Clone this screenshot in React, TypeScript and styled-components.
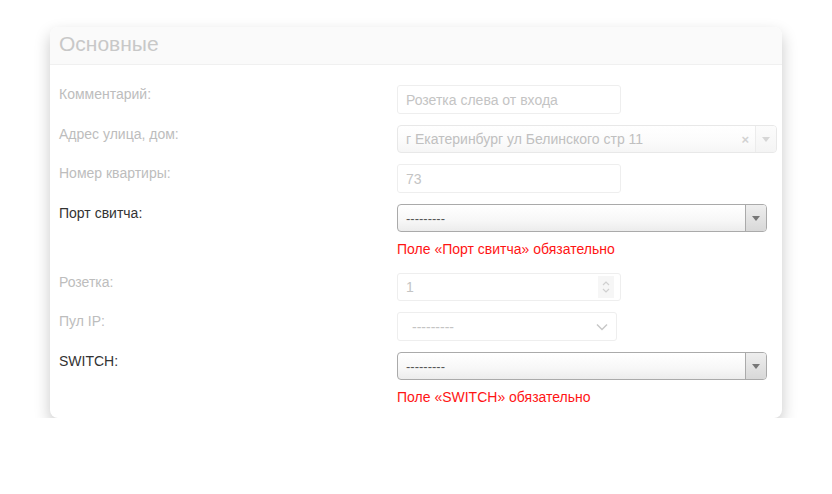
import React from 'react';
import styled, { createGlobalStyle, css } from 'styled-components';

const GlobalStyle = createGlobalStyle`
  html, body {
    margin: 0;
    padding: 0;
    background: #fff;
    font-family: 'Liberation Sans', Arial, sans-serif;
  }
`;

const Page = styled.div`
  padding: 27px 50px 0 50px;
  width: 732px;
`;

const Card = styled.div`
  background: #fff;
  border-radius: 8px;
  box-shadow: 0 7px 16px rgba(0, 0, 0, 0.22);
  overflow: hidden;
`;

const CardHeader = styled.div`
  height: 38px;
  box-sizing: border-box;
  padding: 5px 0 0 9px;
  background: #fafafa;
  border-bottom: 1px solid #f0f0f0;
  font-size: 21px;
  line-height: 24px;
  color: #c8c8c8;
`;

const CardBody = styled.div`
  padding: 20px 0 8px 9px;
  display: flex;
  flex-direction: column;
`;

const Row = styled.div`
  display: grid;
  grid-template-columns: 338px 1fr;
  margin-bottom: 11px;

  &:last-child {
    margin-bottom: 0;
  }
`;

const Label = styled.div<{ $active?: boolean }>`
  font-size: 14px;
  line-height: 16px;
  padding-top: 1px;
  color: ${(p) => (p.$active ? '#333' : '#bdbdbd')};
`;

const Field = styled.div`
  display: flex;
  flex-direction: column;
`;

const TextBox = styled.div<{ $w: number; $h?: number }>`
  width: ${(p) => p.$w}px;
  height: ${(p) => p.$h ?? 29}px;
  box-sizing: border-box;
  border: 1px solid #eee;
  border-radius: 3px;
  display: flex;
  align-items: center;
  padding: 0 8px;
  font-size: 14px;
  color: #c4c4c4;
  background: #fff;
`;

const Spinner = styled.div`
  margin-left: auto;
  width: 16px;
  height: 22px;
  background: #f6f6f6;
  display: flex;
  align-items: center;
  justify-content: center;
`;

const Chevron = styled.div`
  margin-left: auto;
  display: flex;
  align-items: center;
`;

const Select2 = styled.div<{ $w: number; $muted?: boolean }>`
  width: ${(p) => p.$w}px;
  height: 28px;
  box-sizing: border-box;
  border: 1px solid ${(p) => (p.$muted ? '#e8e8e8' : '#aaa')};
  border-radius: 4px;
  display: flex;
  align-items: stretch;
  font-size: ${(p) => (p.$muted ? 14 : 13)}px;
  color: ${(p) => (p.$muted ? '#c0c0c0' : '#555')};
  background: linear-gradient(to bottom, #ffffff 0%, #f7f7f7 60%, #ececec 100%);
  ${(p) =>
    p.$muted &&
    css`
      background: linear-gradient(to bottom, #ffffff 0%, #fbfbfb 60%, #f6f6f6 100%);
    `}
`;

const SelectText = styled.div`
  flex: 1;
  display: flex;
  align-items: center;
  padding-left: 8px;
`;

const Clear = styled.div`
  display: flex;
  align-items: center;
  padding: 0 6px;
  color: #d2d2d2;
  font-size: 13px;
  font-weight: bold;
`;

const ArrowBox = styled.div<{ $muted?: boolean }>`
  width: 20px;
  border-left: 1px solid ${(p) => (p.$muted ? '#ececec' : '#aaa')};
  display: flex;
  align-items: center;
  justify-content: center;
  background: ${(p) =>
    p.$muted
      ? 'linear-gradient(to bottom, #fcfcfc, #f4f4f4)'
      : 'linear-gradient(to bottom, #eeeeee, #d8d8d8)'};
  border-radius: 0 3px 3px 0;
`;

const Triangle = styled.div<{ $muted?: boolean }>`
  width: 0;
  height: 0;
  border-left: 4px solid transparent;
  border-right: 4px solid transparent;
  border-top: 5px solid ${(p) => (p.$muted ? '#d6d6d6' : '#777')};
`;

const ErrorText = styled.div`
  color: #ff1414;
  font-size: 14px;
  line-height: 20px;
  margin-top: 7px;
  margin-bottom: 3px;
`;

const Dashes = '---------';

export default function App() {
  return (
    <>
      <GlobalStyle />
      <Page>
        <Card>
          <CardHeader>Основные</CardHeader>
          <CardBody>
            <Row>
              <Label>Комментарий:</Label>
              <Field>
                <TextBox $w={224}>Розетка слева от входа</TextBox>
              </Field>
            </Row>
            <Row>
              <Label>Адрес улица, дом:</Label>
              <Field>
                <Select2 $w={380} $muted>
                  <SelectText>г Екатеринбург ул Белинского стр 11</SelectText>
                  <Clear>×</Clear>
                  <ArrowBox $muted>
                    <Triangle $muted />
                  </ArrowBox>
                </Select2>
              </Field>
            </Row>
            <Row>
              <Label>Номер квартиры:</Label>
              <Field>
                <TextBox $w={224}>73</TextBox>
              </Field>
            </Row>
            <Row>
              <Label $active>Порт свитча:</Label>
              <Field>
                <Select2 $w={370}>
                  <SelectText>{Dashes}</SelectText>
                  <ArrowBox>
                    <Triangle />
                  </ArrowBox>
                </Select2>
                <ErrorText>Поле «Порт свитча» обязательно</ErrorText>
              </Field>
            </Row>
            <Row>
              <Label>Розетка:</Label>
              <Field>
                <TextBox $w={224} $h={28} style={{ paddingRight: 6 }}>
                  1
                  <Spinner>
                    <svg width="10" height="16" viewBox="0 0 10 16" fill="none" stroke="#d0d0d0" strokeWidth="1.2">
                      <path d="M2 6 L5 3 L8 6" />
                      <path d="M2 10 L5 13 L8 10" />
                    </svg>
                  </Spinner>
                </TextBox>
              </Field>
            </Row>
            <Row>
              <Label>Пул IP:</Label>
              <Field>
                <TextBox $w={220} style={{ paddingLeft: 14 }}>
                  {Dashes}
                  <Chevron>
                    <svg width="12" height="8" viewBox="0 0 12 8" fill="none" stroke="#c8c8c8" strokeWidth="1.5">
                      <path d="M1 1.5 L6 6.5 L11 1.5" />
                    </svg>
                  </Chevron>
                </TextBox>
              </Field>
            </Row>
            <Row>
              <Label $active>SWITCH:</Label>
              <Field>
                <Select2 $w={370}>
                  <SelectText>{Dashes}</SelectText>
                  <ArrowBox>
                    <Triangle />
                  </ArrowBox>
                </Select2>
                <ErrorText>Поле «SWITCH» обязательно</ErrorText>
              </Field>
            </Row>
          </CardBody>
        </Card>
      </Page>
    </>
  );
}
